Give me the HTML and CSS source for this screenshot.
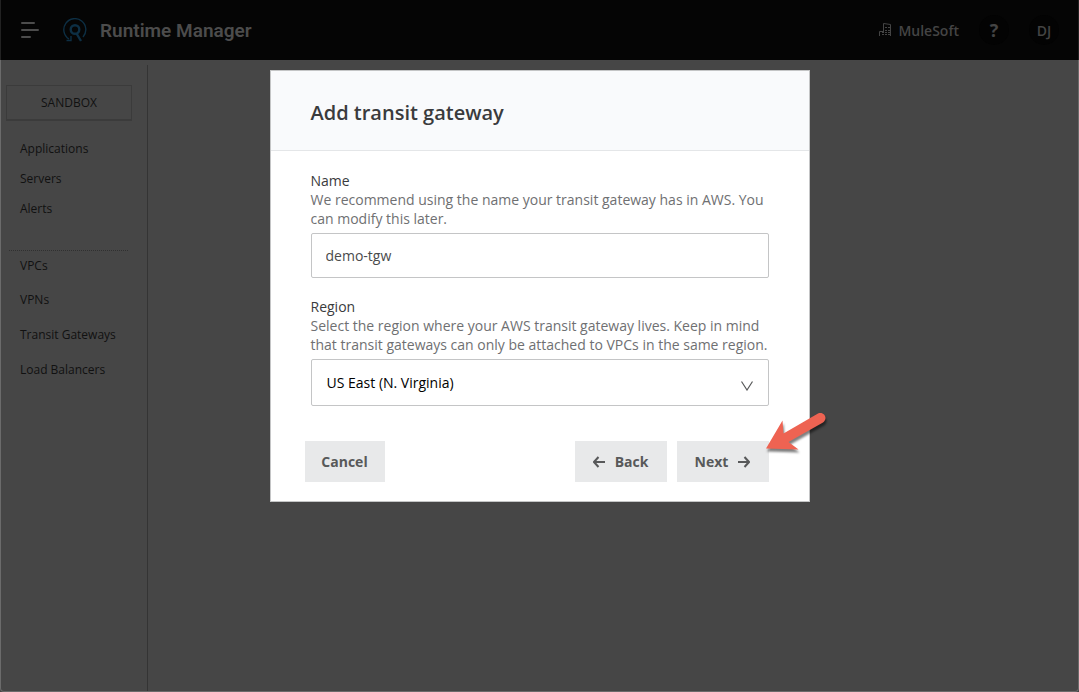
FILE: index.html
```html
<!DOCTYPE html>
<html lang="en">
<head>
<meta charset="utf-8">
<meta name="viewport" content="width=device-width, initial-scale=1">
<title>Runtime Manager</title>
<link rel="stylesheet" href="styles.css">
</head>
<body>
<div class="app">
  <header class="topbar">
    <button class="menu" aria-label="Menu">
      <svg width="18" height="16" viewBox="0 0 18 16" fill="none" stroke="currentColor" stroke-width="2" stroke-linecap="round"><path d="M1 1h12M1 8h16M1 15h8"/></svg>
    </button>
    <svg class="logo" width="24" height="24" viewBox="0 0 24 24" fill="none" stroke="currentColor"><path stroke-width="1.4" d="M6 21A11 11 0 1 1 20 19M3.500 22.500h4.500v-4.500"/><circle cx="12" cy="11.500" r="4.300" stroke-width="2.400"/><path stroke-width="2.400" d="M13.500 15.500l4.500 7.500"/></svg>
    <span class="brand">Runtime Manager</span>
    <div class="account">
      <button class="org">
        <svg width="14" height="16" viewBox="0 0 14 16" fill="none" stroke="currentColor" stroke-width="1"><path d="M1.500 14V9.500H5M5.500 10V1.500L12.500 2.500V14"/><path stroke-dasharray="2 1" d="M7 5.500h5M7 8.500h5M4 10.500h8M4 12.500h8"/></svg>
        MuleSoft
      </button>
      <button class="round help" aria-label="Help">?</button>
      <button class="round user" aria-label="Account">DJ</button>
    </div>
  </header>
  <div class="workspace">
    <nav class="sidebar">
      <button class="environment">SANDBOX</button>
      <ul class="links">
        <li><a href="#">Applications</a></li>
        <li><a href="#">Servers</a></li>
        <li><a href="#">Alerts</a></li>
      </ul>
      <ul class="links network">
        <li><a href="#">VPCs</a></li>
        <li><a href="#">VPNs</a></li>
        <li><a href="#">Transit Gateways</a></li>
        <li><a href="#">Load Balancers</a></li>
      </ul>
    </nav>
    <main class="content"></main>
  </div>
</div>
<div class="overlay">
  <form class="dialog" role="dialog" aria-labelledby="dialog-title">
    <div class="dialog-head"><h1 id="dialog-title">Add transit gateway</h1></div>
    <div class="fields">
      <div class="field">
        <label for="name">Name</label>
        <p>We recommend using the name your transit gateway has in AWS. You can modify this later.</p>
        <input id="name" type="text" value="demo-tgw">
      </div>
      <div class="field">
        <label for="region">Region</label>
        <p>Select the region where your AWS transit gateway lives. Keep in mind that transit gateways can only be attached to VPCs in the same region.</p>
        <div class="select">
          <select id="region"><option>US East (N. Virginia)</option></select>
          <svg class="chevron" width="12" height="10" viewBox="0 0 12 10" fill="none" stroke="currentColor" stroke-width="1.200"><path d="M.5 .5L6 9L11.500 .5"/></svg>
        </div>
      </div>
    </div>
    <div class="actions">
      <button type="button" class="btn cancel">Cancel</button>
      <button type="button" class="btn">
        <svg width="12" height="12" viewBox="0 0 12 12" fill="none" stroke="currentColor" stroke-width="2"><path d="M12 6H1M5.500 1L1 6l4.500 5"/></svg>
        Back
      </button>
      <button type="button" class="btn next">
        Next
        <svg width="12" height="12" viewBox="0 0 12 12" fill="none" stroke="currentColor" stroke-width="2"><path d="M0 6h11M6.500 1L11 6l-4.500 5"/></svg>
        <svg class="pointer" width="64" height="42" viewBox="0 0 64 42"><path fill="#ee6352" d="M2 38.500L18.500 10.500L19.500 23.500L54 3.500C60 1 64.500 8.500 59 12.500L24.500 32L34.500 39.500Z"/></svg>
      </button>
    </div>
  </form>
</div>
</body>
</html>
```
FILE: styles.css
```css
* { box-sizing: border-box; }
body {
  margin: 0;
  background: #464646;
  font-family: "Open Sans", "Noto Sans", sans-serif;
  font-size: 14px;
  line-height: 19px;
}
button, input, select { font: inherit; }
button { border: 0; padding: 0; background: none; color: inherit; }
.app {
  display: flex;
  flex-direction: column;
  min-height: 100vh;
  border: 1px solid #6b6b6b;
  border-top: 0;
  border-radius: 0 0 4px 4px;
}
.topbar {
  display: flex;
  align-items: center;
  height: 60px;
  margin: 0 -1px;
  padding: 0 19px;
  background: #050505;
  border: 1px solid #222;
  border-width: 0 1px;
  color: #4c4c4c;
}
.menu { display: flex; margin-left: 1px; }
.logo { margin-left: 24px; color: #0d2f44; }
.brand {
  margin-left: 13px;
  font-family: Roboto, sans-serif;
  font-size: 19px;
  font-weight: 600;
}
.account {
  display: flex;
  align-items: center;
  margin-left: auto;
  font-weight: 700;
  color: #444;
}
.org { display: flex; align-items: center; gap: 6px; margin-right: 20px; font-weight: 600; }
.round { width: 30px; height: 30px; border-radius: 50%; background: #030303; }
.help { margin-right: 20px; font-size: 18px; }
.user { font-weight: 600; }
.workspace { display: flex; flex: 1; padding-top: 5px; }
.sidebar {
  width: 147px;
  padding: 20px 15px 0 5px;
  border-right: 1px solid #343434;
  font-size: 12px;
  color: #111;
}
.content { flex: 1; }
.environment {
  width: 100%;
  height: 36px;
  border: 1px solid #3b3b3b;
  border-bottom-width: 2px;
}
.links { list-style: none; margin: 12px 4px 0 3px; padding: 0; }
.links li { display: flex; align-items: center; height: 30px; padding-left: 11px; }
.links a { color: inherit; text-decoration: none; }
.network { margin-top: 27px; border-top: 1px dotted #303030; }
.network li { height: 35px; }
.network li:first-child { height: 28px; margin-bottom: 3px; }
.overlay {
  position: fixed;
  inset: 0;
  display: flex;
  justify-content: center;
  align-items: flex-start;
  padding-top: 70px;
}
.dialog {
  width: 540px;
  max-width: 100%;
  background: #fff;
  border: 1px solid #c4c5c6;
}
.dialog-head {
  padding: 30px 40px 25px;
  background: #f9fafc;
  border-bottom: 1px solid #e4e6e8;
}
h1 { margin: 0; font-size: 20px; line-height: 24px; font-weight: 600; color: #3a3b3d; }
.fields { padding: 20px 40px 0; }
.field { margin-bottom: 19px; color: #3a3b3d; }
.field label { display: block; }
.field p { margin: 0 0 5px; color: #6f7072; }
.field input, .field select {
  display: block;
  width: 100%;
  height: 45px;
  padding: 0 14px;
  border: 1px solid #c4c5c6;
  border-radius: 2px;
  background: #fff;
  color: #4a4b4c;
}
.select { position: relative; }
.field select { height: 47px; appearance: none; padding: 0 15px; color: #000; }
.chevron { position: absolute; right: 16px; top: 22px; color: #58595a; pointer-events: none; }
.actions { display: flex; gap: 10px; padding: 16px 40px 19px 34px; }
.btn {
  position: relative;
  display: flex;
  align-items: center;
  justify-content: center;
  gap: 10px;
  width: 92px;
  height: 41px;
  background: #e8e9ea;
  color: #58595a;
  font-weight: 700;
}
.cancel { width: 80px; margin-right: auto; }
.pointer {
  position: absolute;
  left: 87px;
  top: -31px;
  filter: drop-shadow(1px 3px 1px rgba(0, 0, 0, .5));
}
```
